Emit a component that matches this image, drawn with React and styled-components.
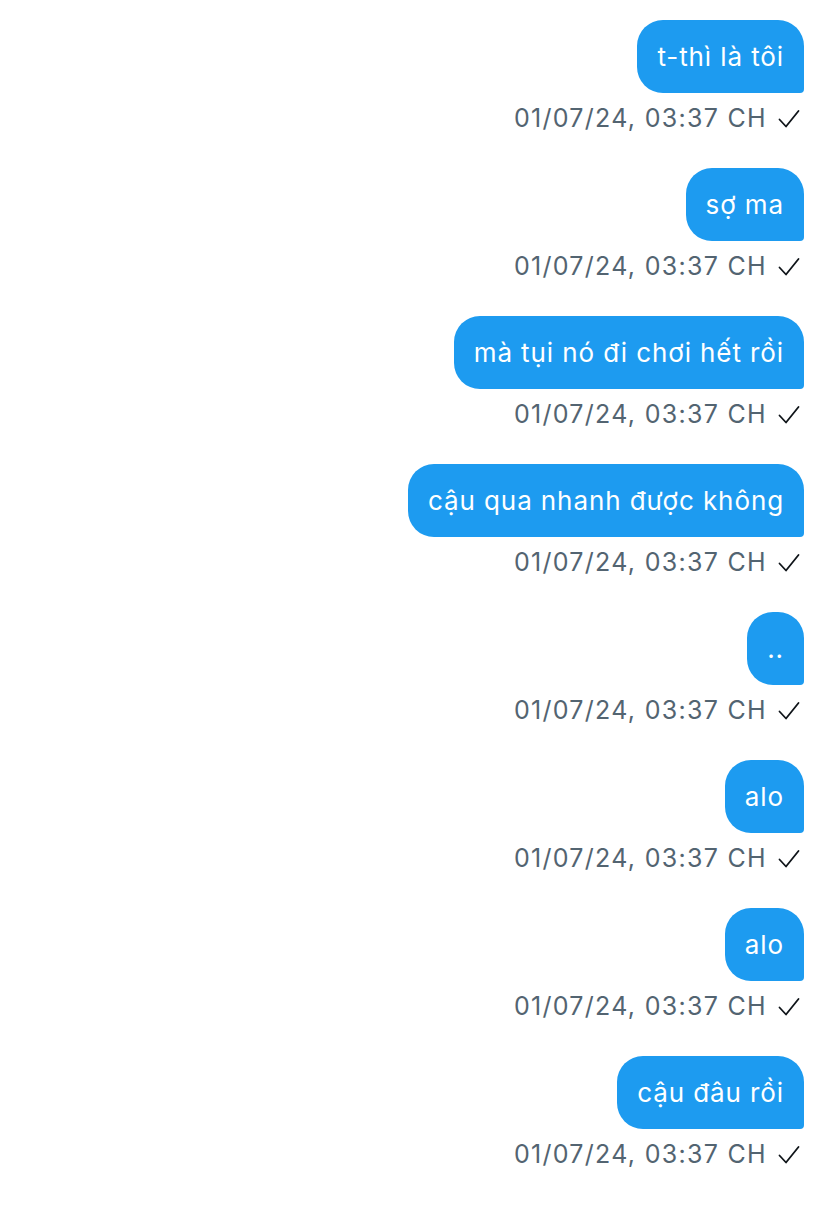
import styled, { createGlobalStyle } from "styled-components";

const GlobalStyle = createGlobalStyle`
    body {
        margin: 0;
        background: #ffffff;
        font-family: Inter, "Noto Sans", "Liberation Sans", sans-serif;
    }
`;

const messages = [
    "t-thì là tôi",
    "sợ ma",
    "mà tụi nó đi chơi hết rồi",
    "cậu qua nhanh được không",
    "..",
    "alo",
    "alo",
    "cậu đâu rồi",
];

const Check = () => (
    <CheckIcon width="22" height="20" viewBox="0 0 22 20" fill="none">
        <path d="M1.5 10.5l6.5 7L20.5 2" stroke="#0f1419" strokeWidth="1.8" strokeLinecap="round" strokeLinejoin="round" />
    </CheckIcon>
);

const App = () => {
    return (
        <Wrapper>
            <GlobalStyle />
            {messages.map((text, i) => (
                <Group key={i}>
                    <Bubble>{text}</Bubble>
                    <Meta>
                        <span>01/07/24, 03:37 CH</span>
                        <Check />
                    </Meta>
                </Group>
            ))}
        </Wrapper>
    );
};

const Wrapper = styled.div`
    display: flex;
    flex-direction: column;
    align-items: flex-end;
    padding: 20px 24px 40px 24px;
    gap: 34px;
`;

const Group = styled.div`
    display: flex;
    flex-direction: column;
    align-items: flex-end;
`;

const Bubble = styled.div`
    box-sizing: border-box;
    height: 73px;
    display: flex;
    align-items: center;
    padding: 0 20px;
    background-color: #1d9bf0;
    color: #ffffff;
    font-size: 26px;
    letter-spacing: 0.9px;
    line-height: 33px;
    border-radius: 26px 26px 4px 26px;
    white-space: nowrap;
`;

const Meta = styled.div`
    display: flex;
    align-items: center;
    gap: 11px;
    height: 32px;
    margin-top: 9px;
    padding-right: 4px;
    color: #536471;
    font-size: 25px;
    letter-spacing: 1.3px;
    line-height: 32px;
`;

const CheckIcon = styled.svg`
    flex-shrink: 0;
    margin-top: 2px;
`;

export default App;
